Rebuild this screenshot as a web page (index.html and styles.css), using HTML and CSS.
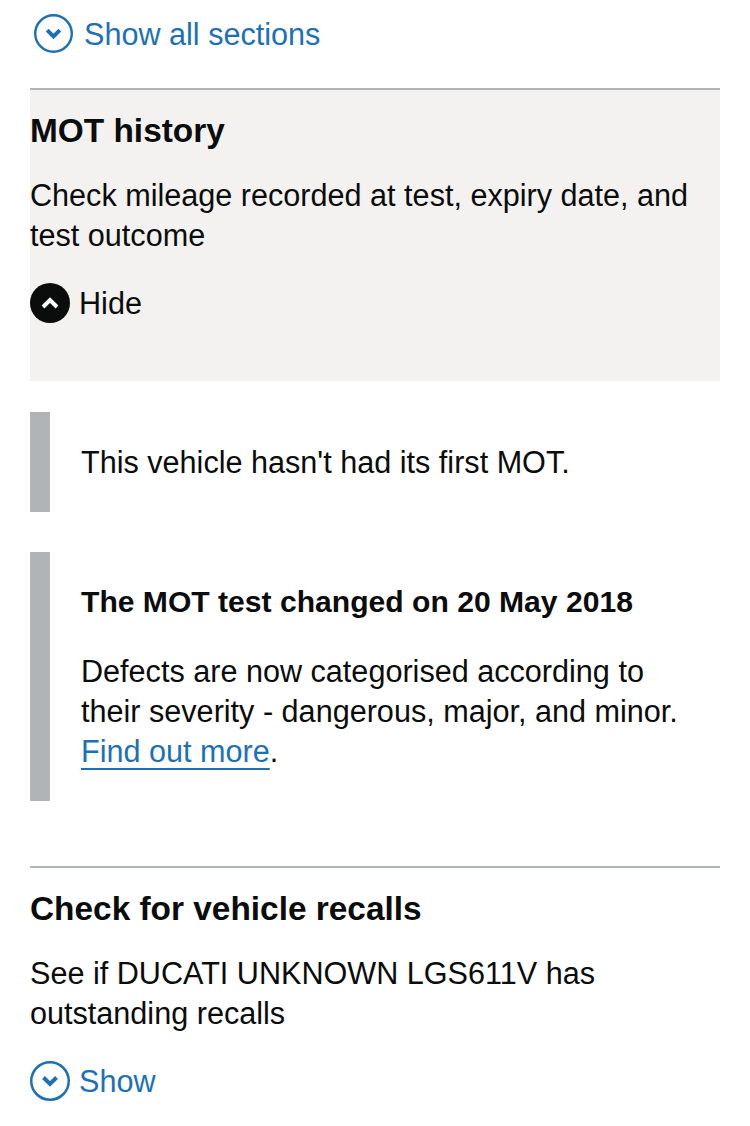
FILE: index.html
```html
<!DOCTYPE html>
<html lang="en">
<head>
<meta charset="utf-8">
<title>MOT history</title>
<link rel="stylesheet" href="styles.css">
</head>
<body>
<div class="page">
  <div class="show-all">
    <svg class="icon" viewBox="0 0 40 40" width="39" height="39" aria-hidden="true">
      <circle cx="20" cy="20" r="18.75" fill="none" stroke="#1d70b8" stroke-width="2.5"/>
      <polyline points="13.5,16.5 20,23 26.5,16.5" fill="none" stroke="#1d70b8" stroke-width="4" stroke-linejoin="miter"/>
    </svg>
    <span class="show-all-text">Show all sections</span>
  </div>

  <div class="section">
    <div class="section-header expanded">
      <h2 class="section-heading">MOT history</h2>
      <p class="section-summary">Check mileage recorded at test, expiry date, and test outcome</p>
      <div class="toggle">
        <svg class="icon" viewBox="0 0 40 40" width="40" height="40" aria-hidden="true">
          <circle cx="20" cy="20" r="20" fill="#0b0c0c"/>
          <polyline points="13,24 20,17 27,24" fill="none" stroke="#ffffff" stroke-width="4" stroke-linejoin="miter"/>
        </svg>
        <span class="toggle-text">Hide</span>
      </div>
    </div>
    <div class="section-content">
      <div class="inset">
        <p class="inset-text">This vehicle hasn't had its first MOT.</p>
      </div>
      <div class="inset inset-wide">
        <h3 class="inset-heading">The MOT test changed on 20 May 2018</h3>
        <p class="inset-body">Defects are now categorised according to their severity - dangerous, major, and minor. <a class="link" href="#">Find out more</a>.</p>
      </div>
    </div>
  </div>

  <div class="section">
    <div class="section-header">
      <h2 class="section-heading">Check for vehicle recalls</h2>
      <p class="section-summary">See if DUCATI UNKNOWN LGS611V has outstanding recalls</p>
      <div class="toggle toggle-link">
        <svg class="icon" viewBox="0 0 40 40" width="40" height="40" aria-hidden="true">
          <circle cx="20" cy="20" r="18.75" fill="none" stroke="#1d70b8" stroke-width="2.5"/>
          <polyline points="13.5,16.5 20,23 26.5,16.5" fill="none" stroke="#1d70b8" stroke-width="4" stroke-linejoin="miter"/>
        </svg>
        <span class="toggle-text">Show</span>
      </div>
    </div>
  </div>
</div>
</body>
</html>
```

FILE: styles.css
```css
html, body {
  margin: 0;
  padding: 0;
  background: #ffffff;
}

body {
  font-family: "Liberation Sans", Arial, sans-serif;
  color: #0b0c0c;
  font-size: 30.6px;
  line-height: 40px;
}

.page {
  padding: 14px 30px 0 30px;
}

p, h2, h3 {
  margin: 0;
}

.icon {
  display: block;
  flex: none;
}

.show-all {
  display: flex;
  align-items: center;
  height: 39px;
  margin-left: 4px;
  margin-bottom: 35px;
  color: #1d70b8;
  gap: 11px;
}

.section {
  border-top: 2px solid #b1b4b6;
}

.section-header {
  padding: 21px 0 58px 0;
}

.section-header.expanded {
  background: #f3f2f1;
}

.section-heading {
  font-size: 33.4px;
  line-height: 40px;
  font-weight: 700;
}

.section-summary {
  margin-top: 24px;
}

.toggle {
  display: flex;
  align-items: center;
  gap: 9px;
  margin-top: 28px;
  height: 40px;
}

.toggle-link {
  color: #1d70b8;
}

.section-content {
  padding: 31px 0 65px 0;
}

.inset {
  border-left: 20px solid #b1b4b6;
  padding: 30px 30px 30px 31px;
}

.inset-wide {
  margin-top: 40px;
}

.inset-heading {
  font-size: 30.1px;
  line-height: 40px;
  font-weight: 700;
}

.inset-body {
  margin-top: 29px;
}

.link {
  color: #1d70b8;
  text-decoration: underline;
  text-decoration-thickness: 2px;
  text-underline-offset: 6px;
}
```
